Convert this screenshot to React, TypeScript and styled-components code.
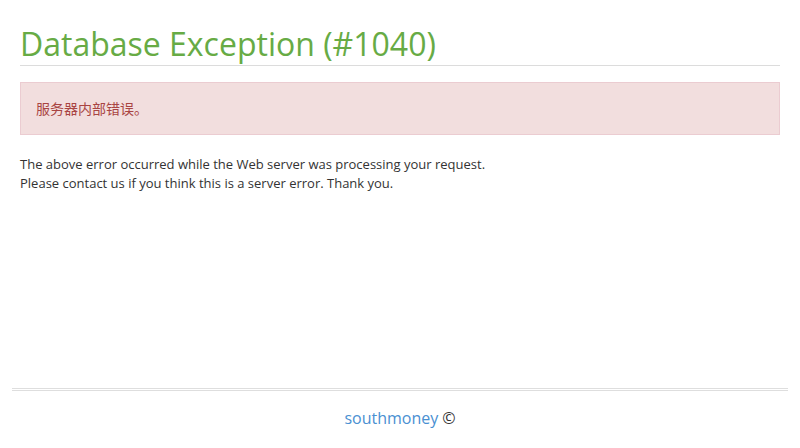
import React from "react";
import styled, { createGlobalStyle } from "styled-components";

const GlobalStyle = createGlobalStyle`
  html, body {
    margin: 0;
    padding: 0;
    background: #fff;
  }
  body {
    font-family: "Open Sans", "Noto Sans CJK SC", sans-serif;
    color: #333;
  }
`;

const Page = styled.div`
  width: 800px;
  height: 448px;
  display: flex;
  flex-direction: column;
  box-sizing: border-box;
`;

const Main = styled.div`
  flex: 1;
  padding: 0 20px;
`;

const Title = styled.h1`
  margin: 24px 0 0;
  padding-bottom: 2px;
  font-size: 32px;
  font-weight: 400;
  line-height: 39px;
  color: #67ab45;
  border-bottom: 1px solid #dcdcdc;
`;

const Alert = styled.div`
  margin-top: 16px;
  padding: 15px;
  background: #f2dede;
  border: 1px solid #ebccd1;
  color: #a94442;
  font-size: 14px;
  line-height: 21px;
`;

const Text = styled.p`
  margin: 20px 0 0;
  font-size: 13px;
  line-height: 19px;
  color: #333;
`;

const Footer = styled.footer`
  margin: 0 12px;
  border-top: 3px double #dedede;
  height: 60px;
  padding-bottom: 4px;
  box-sizing: border-box;
  display: flex;
  align-items: center;
  justify-content: center;
  font-size: 16px;
  color: #333;
`;

const Link = styled.a`
  color: #4a90d2;
  text-decoration: none;
  margin-right: 4px;
`;

export default function App() {
  return (
    <Page>
      <GlobalStyle />
      <Main>
        <Title>Database Exception (#1040)</Title>
        <Alert>服务器内部错误。</Alert>
        <Text>
          The above error occurred while the Web server was processing your request.
          <br />
          Please contact us if you think this is a server error. Thank you.
        </Text>
      </Main>
      <Footer>
        <Link href="#">southmoney</Link>©
      </Footer>
    </Page>
  );
}
